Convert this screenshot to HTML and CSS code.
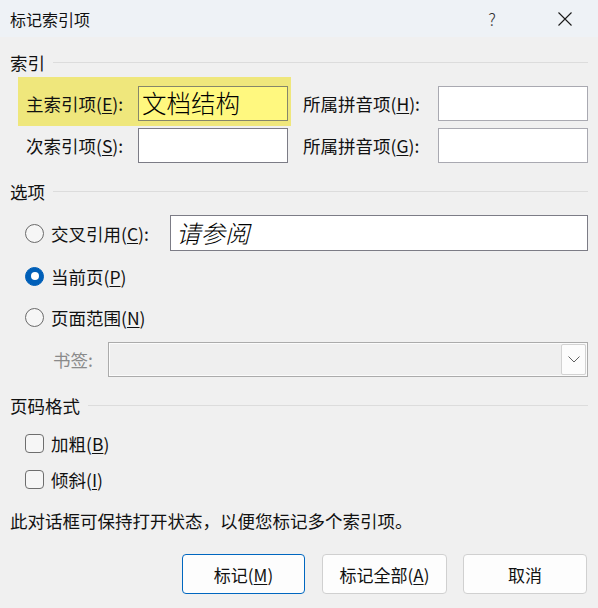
FILE: index.html
```html
<!DOCTYPE html>
<html lang="zh-CN">
<head>
    <meta charset="UTF-8">
    <title>标记索引项</title>
    <link rel="stylesheet" href="styles.css">
</head>
<body>
<div class="dialog">
    <div class="titlebar">
        <span class="title">标记索引项</span>
        <span class="tb-btn help">?</span>
        <span class="tb-btn close">
            <svg width="14" height="14" viewBox="0 0 14 14"><path d="M0.5 0.5 L13.5 13.5 M13.5 0.5 L0.5 13.5" stroke="#1a1a1a" stroke-width="1.1" fill="none"/></svg>
        </span>
    </div>

    <div class="content">
        <div class="group-head head-index"><span>索引</span></div>
        <div class="index-grid">
            <div class="field first hl">
                <label class="lbl-left">主索引项(<u>E</u>):</label>
                <div class="input hl-input"><span class="big">文档结构</span></div>
            </div>
            <div class="field first right">
                <label class="lbl-right">所属拼音项(<u>H</u>):</label>
                <div class="input light"></div>
            </div>
            <div class="field second">
                <label class="lbl-left">次索引项(<u>S</u>):</label>
                <div class="input"></div>
            </div>
            <div class="field second right">
                <label class="lbl-right">所属拼音项(<u>G</u>):</label>
                <div class="input light"></div>
            </div>
        </div>

        <div class="group-head head-options"><span>选项</span></div>
        <div class="opt-row cross">
            <span class="radio"></span>
            <label class="opt-label">交叉引用(<u>C</u>):</label>
            <div class="input wide"><span class="big italic">请参阅</span></div>
        </div>
        <div class="opt-row page">
            <span class="radio on"></span>
            <label>当前页(<u>P</u>)</label>
        </div>
        <div class="opt-row range">
            <span class="radio"></span>
            <label>页面范围(<u>N</u>)</label>
        </div>
        <div class="bookmark-row">
            <label class="disabled">书签:</label>
            <div class="combo">
                <span class="combo-btn">
                    <svg width="12" height="7" viewBox="0 0 12 7"><path d="M0.5 0.5 L6 6 L11.5 0.5" stroke="#606060" stroke-width="1" fill="none"/></svg>
                </span>
            </div>
        </div>

        <div class="group-head head-format"><span>页码格式</span></div>
        <div class="check-row first-check">
            <span class="checkbox"></span>
            <label>加粗(<u>B</u>)</label>
        </div>
        <div class="check-row second-check">
            <span class="checkbox"></span>
            <label>倾斜(<u>I</u>)</label>
        </div>

        <p class="note">此对话框可保持打开状态，以便您标记多个索引项。</p>

        <div class="buttons">
            <button class="btn primary">标记(<u>M</u>)</button>
            <button class="btn all">标记全部(<u>A</u>)</button>
            <button class="btn cancel">取消</button>
        </div>
    </div>
</div>
</body>
</html>
```

FILE: styles.css
```css
body {
    margin: 0;
    font-family: "Noto Sans CJK SC", "Noto Sans", sans-serif;
    font-size: 17.5px;
    color: #111;
    background: #f0f0f0;
}

u {
    text-decoration: underline;
    text-underline-offset: 2px;
    text-decoration-thickness: 1px;
}

.dialog {
    width: 598px;
    height: 608px;
    overflow: hidden;
    display: flex;
    flex-direction: column;
}

/* title bar */
.titlebar {
    height: 37px;
    flex: none;
    background: #eef2f6;
    display: flex;
    align-items: center;
    padding-left: 10px;
    font-size: 16px;
}

.title {
    flex: 1;
}

.tb-btn {
    width: 46px;
    height: 37px;
    display: flex;
    align-items: center;
    justify-content: center;
    color: #333;
}

.help {
    font-size: 17px;
    font-weight: 300;
    margin-right: 27px;
}

.close {
    margin-right: 10px;
}

.content {
    padding: 0 10px;
}

/* group headings with rule */
.group-head {
    display: flex;
    align-items: center;
    gap: 8px;
    height: 24px;
}

.group-head::after {
    content: "";
    flex: 1;
    border-top: 1px solid #dcdcdc;
}

.head-index { margin-top: 13px; }
.head-options { margin-top: 14px; }
.head-format { margin-top: 16px; }

/* index fields */
.index-grid {
    display: grid;
    grid-template-columns: 273px 285px;
    column-gap: 12px;
    margin-left: 8px;
    margin-top: 3px;
}

.field {
    display: flex;
    align-items: center;
    box-sizing: border-box;
    padding: 0 3px 0 8px;
}

.field.right {
    padding: 0;
}

.field.first {
    height: 49px;
    padding-top: 9px;
    padding-bottom: 5px;
}

.field.second {
    height: 39px;
    padding-top: 2px;
    padding-bottom: 2px;
}

.hl {
    background: #efe77c;
}

.lbl-left {
    width: 112px;
}

.lbl-right {
    width: 135px;
}

.input {
    width: 150px;
    height: 35px;
    box-sizing: border-box;
    border: 1px solid #7c7c86;
    background: #fff;
    display: flex;
    align-items: center;
    padding-left: 3px;
    overflow: hidden;
}

.input.light {
    border-color: #a9a9b1;
}

.hl-input {
    background: #fff87f;
    border-color: #86866a;
}

.big {
    font-size: 24.5px;
    font-weight: 300;
    line-height: 1;
    white-space: nowrap;
    color: #000;
}

.italic {
    font-style: italic;
    margin-left: 2px;
}

/* options */
.opt-row {
    display: flex;
    align-items: center;
    padding-left: 15px;
    height: 28px;
}

.opt-row.cross {
    height: 36px;
    margin-top: 12px;
}

.opt-row.page { margin-top: 11px; }
.opt-row.range { margin-top: 13px; }

.radio {
    width: 19px;
    height: 19px;
    box-sizing: border-box;
    border: 1px solid #6a6a6a;
    border-radius: 50%;
    background: #f6f6f6;
    margin-right: 7px;
    display: flex;
    align-items: center;
    justify-content: center;
    flex: none;
}

.radio.on {
    background: #005fb8;
    border-color: #005fb8;
}

.radio.on::after {
    content: "";
    width: 8px;
    height: 8px;
    border-radius: 50%;
    background: #fff;
}

.opt-label {
    width: 119px;
}

.input.wide {
    width: 418px;
    height: 36px;
}

.bookmark-row {
    display: flex;
    align-items: center;
    height: 35px;
    margin-top: 11px;
    padding-left: 43px;
}

.disabled {
    color: #8a8a8a;
    width: 55px;
}

.combo {
    width: 480px;
    height: 35px;
    box-sizing: border-box;
    border: 1px solid #ababab;
    box-shadow: inset 0 0 0 1px #fbfbfb;
    background: #efefef;
    display: flex;
    justify-content: flex-end;
    align-items: center;
    padding-right: 1px;
}

.combo-btn {
    width: 25px;
    height: 31px;
    box-sizing: border-box;
    border: 1px solid #d2d2d2;
    border-radius: 2px;
    background: #fcfcfc;
    display: flex;
    align-items: center;
    justify-content: center;
}

/* checkboxes */
.check-row {
    display: flex;
    align-items: center;
    height: 24px;
    padding-left: 15px;
}

.first-check { margin-top: 14px; }
.second-check { margin-top: 12px; }

.checkbox {
    width: 19px;
    height: 19px;
    box-sizing: border-box;
    border: 1px solid #6e6e6e;
    border-radius: 4px;
    background: #f6f6f6;
    margin-right: 7px;
    flex: none;
}

.note {
    margin: 18px 0 0;
    height: 24px;
    line-height: 24px;
}

/* footer buttons */
.buttons {
    display: flex;
    justify-content: flex-end;
    margin-top: 21px;
    padding-right: 1px;
}

.btn {
    height: 40px;
    box-sizing: border-box;
    border: 1px solid #d0d0d0;
    border-radius: 4px;
    background: #fdfdfd;
    font-family: inherit;
    font-size: 17px;
    color: #111;
    padding: 0;
}

.btn.primary {
    width: 123px;
    border-color: #0067c0;
    margin-right: 17px;
}

.btn.all {
    width: 125px;
    margin-right: 16px;
}

.btn.cancel {
    width: 124px;
}
```
